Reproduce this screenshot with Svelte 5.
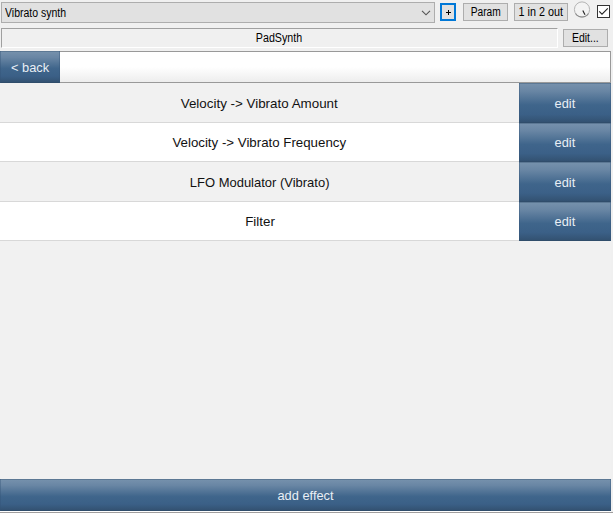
<script>
  const effects = [
    { name: 'Velocity -> Vibrato Amount', height: 40, stretch: 0.991 },
    { name: 'Velocity -> Vibrato Frequency', height: 39, stretch: 0.984 },
    { name: 'LFO Modulator (Vibrato)', height: 40, stretch: 0.961 },
    { name: 'Filter', height: 39, stretch: 0.99 }
  ];
</script>

<main>
  <div class="toolbar">
    <div class="select">
      <span class="preset">Vibrato synth</span>
      <svg width="10" height="6" viewBox="0 0 10 6"><path d="M1 .8 5 4.8 9 .8" fill="none" stroke="#555" stroke-width="1.15" /></svg>
    </div>
    <button class="native plus" aria-label="+"><svg width="5" height="5"><path d="M0 2.5h5M2.5 0v5" stroke="#000" /></svg></button>
    <button class="native param"><span>Param</span></button>
    <button class="native io"><span>1 in 2 out</span></button>
    <svg class="knob" width="18" height="19" viewBox="0 0 18 19">
      <circle cx="9" cy="9.5" r="7.6" fill="#f3f3f3" stroke="#b4b4b4" />
      <path d="M2.5 13.5a7.8 7.8 0 0 0 13 0" fill="none" stroke="#8a8a8a" stroke-width="1.1" />
      <path d="m9.8 10.5 2.2 4.3" stroke="#222" stroke-width="1.1" />
    </svg>
    <svg class="check" width="13" height="13" viewBox="0 0 13 13">
      <rect x=".5" y=".5" width="12" height="12" fill="#fff" stroke="#333" />
      <path d="m2.2 6.3 2.8 2.8 5.8-5.8" fill="none" stroke="#222" stroke-width="1.1" />
    </svg>
  </div>
  <div class="plugin">
    <div class="title"><span>PadSynth</span></div>
    <button class="native edit-plugin"><span>Edit...</span></button>
  </div>
  <section>
    <header><button class="blue back"><span>&lt; back</span></button><div class="blank"></div></header>
    {#each effects as effect, i}
      <div class="row" class:white={i % 2 === 1} style:height="{effect.height}px">
        <div class="name"><span style:transform="scaleX({effect.stretch})">{effect.name}</span></div>
        <button class="blue edit"><span>edit</span></button>
      </div>
    {/each}
    <div class="space"></div>
    <button class="blue add"><span>add effect</span></button>
  </section>
</main>

<style>
  :global(body) { margin: 0; background: #f0f0f0; overflow: hidden; }
  main { width: 613px; height: 513px; box-sizing: border-box; display: flex; flex-direction: column; background: #f0f0f0; border-bottom: 1px solid #a09e9e; font: 12px/14px "Liberation Sans", Arial, sans-serif; color: #000; }
  button { margin: 0; padding: 0; border: 0; border-radius: 0; box-sizing: border-box; font: inherit; color: inherit; white-space: nowrap; flex: none; }
  span { display: inline-block; flex: none; white-space: nowrap; }
  svg { display: block; flex: none; }
  .toolbar { display: flex; height: 28px; padding: 2px 0 0 1px; box-sizing: border-box; flex: none; }
  .select { width: 434px; height: 21px; padding: 0 3px 0 3px; box-sizing: border-box; display: flex; align-items: center; justify-content: space-between; background: #e1e1e1; border: 1px solid #adadad; }
  .preset { transform: scaleX(.875); transform-origin: left; }
  .native { height: 18px; display: flex; align-items: center; justify-content: center; background: #e1e1e1; border: 1px solid #adadad; }
  .plus { width: 16px; margin: 1px 0 0 5px; border: 2px solid #0078d7; }
  .param { width: 45px; margin: 1px 0 0 7px; }
  .param span { transform: scaleX(.85); }
  .io { width: 54px; margin: 1px 0 0 6px; }
  .io span { transform: scaleX(.9); }
  .knob { margin: -2px 0 0 5px; }
  .check { margin: 3px 0 0 6px; }
  .plugin { display: flex; height: 23px; padding-left: 1px; flex: none; box-sizing: border-box; }
  .title { width: 557px; height: 20px; box-sizing: border-box; border: 1px solid #a0a0a0; border-right-color: #fff; border-bottom-color: #fff; display: flex; align-items: center; justify-content: center; }
  .title span { transform: scaleX(.89); }
  .edit-plugin { width: 45px; margin: 1px 0 0 5px; }
  .edit-plugin span { transform: scaleX(.87); }
  section { width: 611px; height: 461px; display: flex; flex-direction: column; background: #f1f1f1; border-bottom: 1px solid #fff; font-size: 13.5px; line-height: 16px; }
  header { display: flex; height: 32px; flex: none; }
  .blank { flex: 1; box-sizing: border-box; border: 1px solid #999; border-left: 0; background: linear-gradient(#fff 50%, #ededed); }
  .blue { color: #e9eff5; background: linear-gradient(#7792ad 0%, #6986a4 20%, #3f658b 55%, #3b6087 78%, #32506f 100%); box-shadow: inset 1px 0 #35567966, inset -1px 0 #35567966, inset 0 1px #4b678499, inset 0 -1px #304d6b; }
  .back { width: 60px; height: 32px; padding: 1px 0 0 1px; }
  .blue span { transform: scaleX(.95); }
  .row { display: flex; flex: none; background: #f1f1f1; }
  .row.white { background: #fff; }
  .name { flex: 1; display: flex; align-items: center; justify-content: center; border-bottom: 1px solid #d8d8d8; padding-top: 2px; color: #111; }
  .edit { width: 92px; height: 100%; padding-top: 1px; }
  .space { flex: 1; }
  .add { width: 100%; height: 32px; padding-top: 2px; }
</style>
